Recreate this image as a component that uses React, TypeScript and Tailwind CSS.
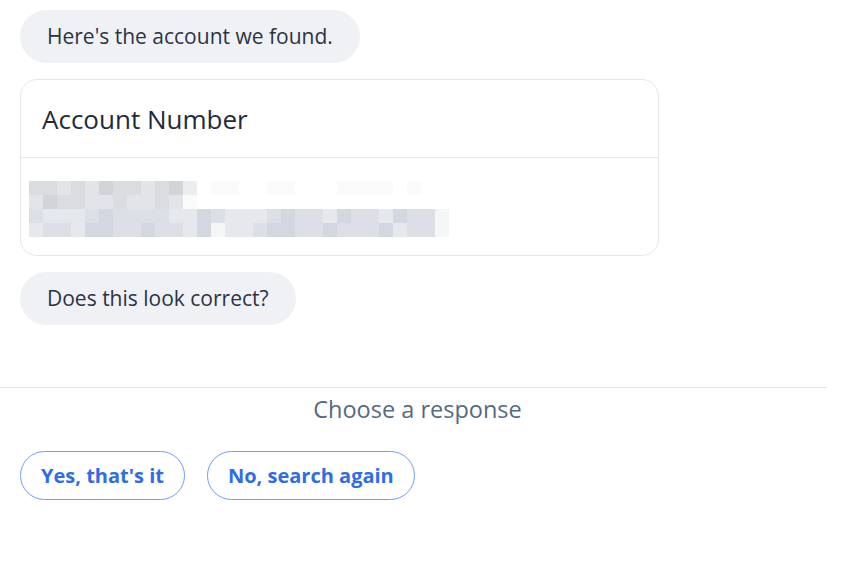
const blur: Record<string, string> = {
  a: 'bg-[#d2d4d8]',
  b: 'bg-[#dadcdf]',
  c: 'bg-[#e2e4e7]',
  d: 'bg-[#ebedef]',
  e: 'bg-[#fafafb]',
  f: 'bg-[#d3d8e0]',
  g: 'bg-[#dce0e6]',
  h: 'bg-[#e5e8ed]',
  i: 'bg-[#f5f6f8]',
  w: 'bg-white',
};

// pixelated account number, one string per row of 14px cells
const blurRows = [
  'bbcbcabbcbad' + 'weewweewwweeeewe',
  'cabbccbccbce' + 'wwwwwwwwwwwwwwww',
  'ghhhgfgggghhfghhhgfgghfgghfggi',
  'hgghffggfgghfihhgffggfgggfhggi',
];

const Bubble = ({ text }: { text: string }) => (
  <div className="self-start rounded-[27px] bg-[#eff1f5] px-[27px] py-[13px] text-[21px] leading-[27px] text-[#2a3444]">
    {text}
  </div>
);

export default function App() {
  return (
    <div className="h-[568px] w-[846px] bg-white font-['Open_Sans',sans-serif]">
      <div className="flex flex-col gap-4 px-5 pt-[10px]">
        <Bubble text="Here's the account we found." />

        <div className="w-[639px] rounded-[17px] border border-[#e6e7ea]">
          <div className="border-b border-[#e6e7ea] px-[21px] pb-[21px] pt-[22px] text-[26px] leading-[34px] text-[#1f2a3a]">
            Account Number
          </div>
          <div className="flex flex-col px-2 pb-[18px] pt-[23px]">
            {blurRows.map((row, r) => (
              <div key={r} className="flex h-[14px]">
                {row.split('').map((c, i) => (
                  <div key={i} className={`h-full w-[14px] ${blur[c]}`} />
                ))}
              </div>
            ))}
          </div>
        </div>

        <Bubble text="Does this look correct?" />
      </div>

      <div className="mt-[62px] w-[827px] border-t border-[#e3e4e6] pl-[8px] pt-[6px] text-center text-[23.5px] leading-[30px] text-[#566a80]">
        Choose a response
      </div>

      <div className="flex gap-[22px] px-5 pt-[27px]">
        <button className="h-[49px] rounded-full border border-[#6d9cf5] px-5 text-[20px] font-bold text-[#2f6cea]">
          Yes, that's it
        </button>
        <button className="h-[49px] rounded-full border border-[#6d9cf5] px-5 text-[20px] font-bold text-[#2f6cea]">
          No, search again
        </button>
      </div>
    </div>
  );
}
